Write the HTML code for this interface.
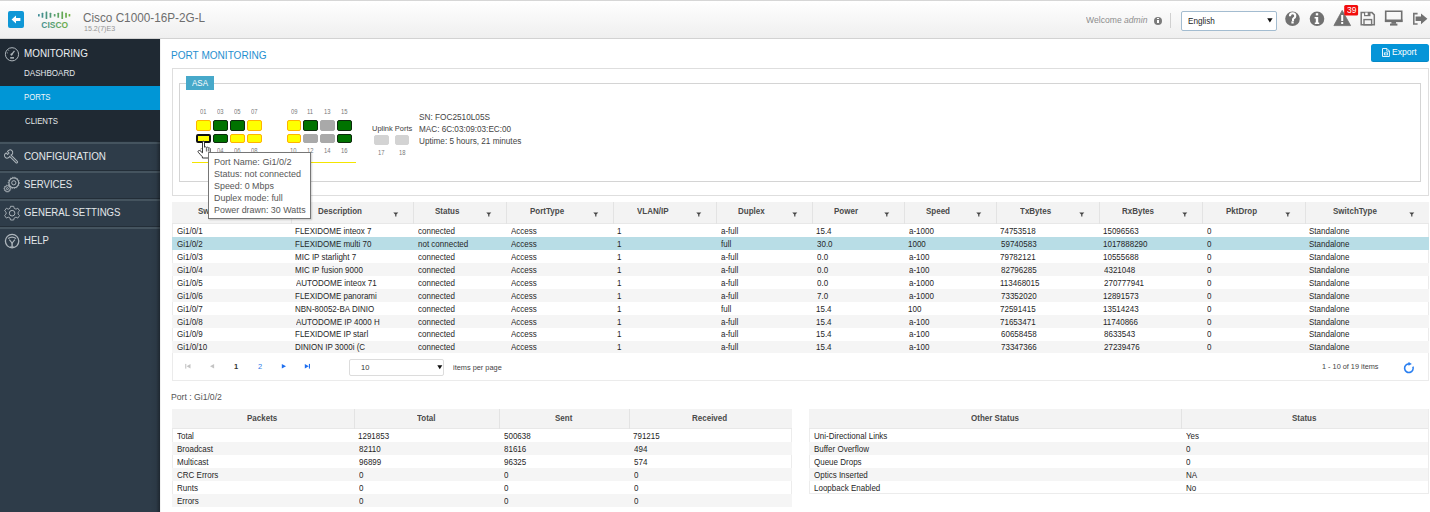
<!DOCTYPE html>
<html><head><meta charset="utf-8"><style>
*{box-sizing:border-box;margin:0;padding:0}
html,body{width:1430px;height:512px;overflow:hidden;background:#fff}
body{position:relative;font-family:"Liberation Sans",sans-serif}
.a,.b{position:absolute}
.t{position:absolute;line-height:1;white-space:nowrap;transform-origin:0 0}
.pb{position:absolute;width:14.5px;border-radius:2px;border:1px solid}
.pb.y{background:#ffff00;border-color:#ffb300}
.pb.g{background:#007300;border-color:#0d2a0d}
.pb.s{background:#a9a9a9;border-color:#a9a9a9}
.pb.h{background:#ffff00;border:2px solid #111}
.pb.u{background:#d3d3d3;border-color:#d3d3d3}
</style></head><body>
<div class='b' style='left:0;top:0;width:1430px;height:39px;border-top:1px solid #d6d6d6;border-bottom:1px solid #d2d2d2;background:linear-gradient(#ffffff 0%,#fcfcfc 15%,#efefef 100%)'></div>
<div class='b' style='left:8px;top:11px;width:16px;height:17px;background:#0f97d6;border-radius:2px'></div>
<svg class='b' style='left:8px;top:11px' width='16' height='17' viewBox='0 0 16 17'><path d='M3.6 8.5 L8 4.4 L8 7.1 L12.4 7.1 L12.4 9.9 L8 9.9 L8 12.6 Z' fill='#fff'/></svg>
<svg class='b' style='left:36px;top:5px' width='36' height='25' viewBox='0 0 36 25'>
 <defs><linearGradient id='cg' x1='0' x2='1'><stop offset='0' stop-color='#3f8c96'/><stop offset='1' stop-color='#72b33f'/></linearGradient>
 <linearGradient id='cg2' gradientUnits='userSpaceOnUse' x1='3' x2='35'><stop offset='0' stop-color='#3f8c96'/><stop offset='1' stop-color='#72b33f'/></linearGradient></defs>
 <g fill='url(#cg2)'>
  <rect x='2.0' y='9.00' width='1.7' height='2.6' rx='0.5'/>
  <rect x='5.6' y='7.80' width='1.7' height='5' rx='0.5'/>
  <rect x='9.6' y='6.50' width='1.7' height='7.6' rx='0.5'/>
  <rect x='13.6' y='7.80' width='1.7' height='5' rx='0.5'/>
  <rect x='17.8' y='9.10' width='1.7' height='2.4' rx='0.5'/>
  <rect x='21.4' y='7.80' width='1.7' height='5' rx='0.5'/>
  <rect x='25.4' y='6.50' width='1.7' height='7.6' rx='0.5'/>
  <rect x='29.2' y='7.80' width='1.7' height='5' rx='0.5'/>
  <rect x='32.6' y='9.00' width='1.7' height='2.6' rx='0.5'/>
 </g>
 <text x='5.3' y='22.7' textLength='26.8' lengthAdjust='spacingAndGlyphs' font-family='Liberation Sans' font-weight='bold' font-size='8.6' fill='url(#cg2)'>CISCO</text>
</svg>
<div class='b' style='left:1154px;top:16.5px;width:8px;height:8px;border-radius:50%;background:#7b7b7b'></div>
<div class='b' style='left:1157.3px;top:18px;width:1.4px;height:1.3px;background:#fff'></div>
<div class='b' style='left:1157.3px;top:19.8px;width:1.4px;height:3.3px;background:#fff'></div>
<div class='b' style='left:1170px;top:13px;width:1px;height:15px;background:#d0d0d0'></div>
<div class='b' style='left:1181px;top:11px;width:96px;height:20px;border:1px solid #a3bcd0;background:#fff;border-radius:2px'></div>
<svg class='b' style='left:1266.5px;top:17.8px' width='6' height='5' viewBox='0 0 6 5'><path d='M0.2 0.3 L5.6 0.3 L2.9 4.4 Z' fill='#111'/></svg>
<div class='b' style='left:0;top:39px;width:160px;height:473px;background:#2e3c49'></div>
<div class='b' style='left:0;top:39px;width:160px;height:103px;background:#1f2933'></div>
<div class='b' style='left:0;top:85.5px;width:160px;height:24px;background:#0096d6'></div>
<div class='b' style='left:0;top:141px;width:160px;height:1px;background:#232e38'></div>
<div class='b' style='left:0;top:142px;width:160px;height:1.5px;background:#45545f'></div>
<div class='b' style='left:0;top:170px;width:160px;height:1px;background:#232e38'></div>
<div class='b' style='left:0;top:171px;width:160px;height:1.5px;background:#45545f'></div>
<div class='b' style='left:0;top:198px;width:160px;height:1px;background:#232e38'></div>
<div class='b' style='left:0;top:199px;width:160px;height:1.5px;background:#45545f'></div>
<div class='b' style='left:0;top:226px;width:160px;height:1px;background:#232e38'></div>
<div class='b' style='left:0;top:227px;width:160px;height:1.5px;background:#45545f'></div>
<div class='b' style='left:150px;top:141px;width:10px;height:371px;background:linear-gradient(90deg,rgba(0,0,0,0),rgba(0,0,0,0.05) 60%,rgba(0,0,0,0.35))'></div>
<div class='b' style='left:160px;top:39px;width:1px;height:473px;background:#f2f2f2'></div>
<div class='b' style='left:1371px;top:44px;width:57.5px;height:17.5px;background:#0595d8;border-radius:2.5px;box-shadow:inset 0 -1px 0 rgba(0,0,0,0.08)'></div>
<svg class='b' style='left:1382.4px;top:48px' width='8' height='9' viewBox='0 0 8 9'>
 <path d='M0.5 0.5 L4.9 0.5 L7.4 3 L7.4 8.5 L0.5 8.5 Z' fill='none' stroke='#e6f5fd' stroke-width='1'/>
 <path d='M4.7 0.5 L4.7 3.2 L7.4 3.2' fill='none' stroke='#e6f5fd' stroke-width='0.8'/>
 <rect x='1.9' y='4.4' width='4' height='2.9' fill='#e6f5fd'/>
 <path d='M2.7 5 L5.1 6.8 M5.1 5 L2.7 6.8' stroke='#0595d8' stroke-width='0.6'/>
</svg>
<div class='b' style='left:171.5px;top:68px;width:1257px;height:128px;border:1px solid #dedede'></div>
<div class='b' style='left:179px;top:83px;width:1242px;height:99px;border:1px solid #d4d4d4'></div>
<div class='b' style='left:186px;top:76px;width:27.7px;height:13.8px;background:#47a9ca'></div>
<div class='pb y' style='left:196.3px;top:120px;height:10.6px'></div>
<div class='pb h' style='left:196.3px;top:133.7px;height:9.4px'></div>
<div class='pb g' style='left:213.2px;top:120px;height:10.6px'></div>
<div class='pb g' style='left:213.2px;top:133.7px;height:9.4px'></div>
<div class='pb g' style='left:230.1px;top:120px;height:10.6px'></div>
<div class='pb y' style='left:230.1px;top:133.7px;height:9.4px'></div>
<div class='pb y' style='left:247.0px;top:120px;height:10.6px'></div>
<div class='pb y' style='left:247.0px;top:133.7px;height:9.4px'></div>
<div class='pb y' style='left:286.7px;top:120px;height:10.6px'></div>
<div class='pb y' style='left:286.7px;top:133.7px;height:9.4px'></div>
<div class='pb g' style='left:303.4px;top:120px;height:10.6px'></div>
<div class='pb s' style='left:303.4px;top:133.7px;height:9.4px'></div>
<div class='pb s' style='left:320.4px;top:120px;height:10.6px'></div>
<div class='pb s' style='left:320.4px;top:133.7px;height:9.4px'></div>
<div class='pb g' style='left:337.2px;top:120px;height:10.6px'></div>
<div class='pb g' style='left:337.2px;top:133.7px;height:9.4px'></div>
<div class='pb u' style='left:374.3px;top:135.3px;height:10.2px'></div>
<div class='pb u' style='left:394.7px;top:135.3px;height:10.2px'></div>
<div class='b' style='left:192px;top:162px;width:164px;height:1px;background:#f4e500'></div>
<div class='b' style='left:171.5px;top:201.5px;width:1257.5px;height:179.5px;border:1px solid #ebebeb'></div>
<div class='b' style='left:172px;top:202px;width:1256.5px;height:22px;background:#f3f3f3;border-bottom:1px solid #e8e8e8'></div>
<div class='b' style='left:291px;top:202px;width:1px;height:21.5px;background:#e3e3e3'></div>
<div class='b' style='left:412.5px;top:202px;width:1px;height:21.5px;background:#e3e3e3'></div>
<div class='b' style='left:506px;top:202px;width:1px;height:21.5px;background:#e3e3e3'></div>
<div class='b' style='left:612.5px;top:202px;width:1px;height:21.5px;background:#e3e3e3'></div>
<div class='b' style='left:716px;top:202px;width:1px;height:21.5px;background:#e3e3e3'></div>
<div class='b' style='left:812px;top:202px;width:1px;height:21.5px;background:#e3e3e3'></div>
<div class='b' style='left:904px;top:202px;width:1px;height:21.5px;background:#e3e3e3'></div>
<div class='b' style='left:996px;top:202px;width:1px;height:21.5px;background:#e3e3e3'></div>
<div class='b' style='left:1099px;top:202px;width:1px;height:21.5px;background:#e3e3e3'></div>
<div class='b' style='left:1202px;top:202px;width:1px;height:21.5px;background:#e3e3e3'></div>
<div class='b' style='left:1305px;top:202px;width:1px;height:21.5px;background:#e3e3e3'></div>
<svg class='b' style='left:271.4px;top:212px' width='6' height='5' viewBox='0 0 6 5'><path d='M0.3 0.4 L5.3 0.4 L3.4 2.4 L3.4 4.6 L2.2 4.6 L2.2 2.4 Z' fill='#444'/></svg>
<svg class='b' style='left:392.9px;top:212px' width='6' height='5' viewBox='0 0 6 5'><path d='M0.3 0.4 L5.3 0.4 L3.4 2.4 L3.4 4.6 L2.2 4.6 L2.2 2.4 Z' fill='#444'/></svg>
<svg class='b' style='left:486.4px;top:212px' width='6' height='5' viewBox='0 0 6 5'><path d='M0.3 0.4 L5.3 0.4 L3.4 2.4 L3.4 4.6 L2.2 4.6 L2.2 2.4 Z' fill='#444'/></svg>
<svg class='b' style='left:592.9px;top:212px' width='6' height='5' viewBox='0 0 6 5'><path d='M0.3 0.4 L5.3 0.4 L3.4 2.4 L3.4 4.6 L2.2 4.6 L2.2 2.4 Z' fill='#444'/></svg>
<svg class='b' style='left:696.4px;top:212px' width='6' height='5' viewBox='0 0 6 5'><path d='M0.3 0.4 L5.3 0.4 L3.4 2.4 L3.4 4.6 L2.2 4.6 L2.2 2.4 Z' fill='#444'/></svg>
<svg class='b' style='left:792.4px;top:212px' width='6' height='5' viewBox='0 0 6 5'><path d='M0.3 0.4 L5.3 0.4 L3.4 2.4 L3.4 4.6 L2.2 4.6 L2.2 2.4 Z' fill='#444'/></svg>
<svg class='b' style='left:884.4px;top:212px' width='6' height='5' viewBox='0 0 6 5'><path d='M0.3 0.4 L5.3 0.4 L3.4 2.4 L3.4 4.6 L2.2 4.6 L2.2 2.4 Z' fill='#444'/></svg>
<svg class='b' style='left:976.4px;top:212px' width='6' height='5' viewBox='0 0 6 5'><path d='M0.3 0.4 L5.3 0.4 L3.4 2.4 L3.4 4.6 L2.2 4.6 L2.2 2.4 Z' fill='#444'/></svg>
<svg class='b' style='left:1079.4px;top:212px' width='6' height='5' viewBox='0 0 6 5'><path d='M0.3 0.4 L5.3 0.4 L3.4 2.4 L3.4 4.6 L2.2 4.6 L2.2 2.4 Z' fill='#444'/></svg>
<svg class='b' style='left:1182.4px;top:212px' width='6' height='5' viewBox='0 0 6 5'><path d='M0.3 0.4 L5.3 0.4 L3.4 2.4 L3.4 4.6 L2.2 4.6 L2.2 2.4 Z' fill='#444'/></svg>
<svg class='b' style='left:1285.4px;top:212px' width='6' height='5' viewBox='0 0 6 5'><path d='M0.3 0.4 L5.3 0.4 L3.4 2.4 L3.4 4.6 L2.2 4.6 L2.2 2.4 Z' fill='#444'/></svg>
<svg class='b' style='left:1408.9px;top:212px' width='6' height='5' viewBox='0 0 6 5'><path d='M0.3 0.4 L5.3 0.4 L3.4 2.4 L3.4 4.6 L2.2 4.6 L2.2 2.4 Z' fill='#444'/></svg>
<div class='b' style='left:172px;top:237.30px;width:1256.5px;height:12.9px;background:#b8dde6'></div>
<div class='b' style='left:172px;top:263.10px;width:1256.5px;height:12.9px;background:#f5f5f5'></div>
<div class='b' style='left:172px;top:288.90px;width:1256.5px;height:12.9px;background:#f5f5f5'></div>
<div class='b' style='left:172px;top:314.70px;width:1256.5px;height:12.9px;background:#f5f5f5'></div>
<div class='b' style='left:172px;top:340.50px;width:1256.5px;height:12.9px;background:#f5f5f5'></div>
<svg class='b' style='left:180px;top:360px' width='140' height='12' viewBox='180 360 140 12'>
 <rect x='185.2' y='363.9' width='1.1' height='4.7' fill='#c4c4c4'/>
 <path d='M190.5 363.9 L190.5 368.6 L186.6 366.25 Z' fill='#c4c4c4'/>
 <path d='M214.1 363.9 L214.1 368.6 L210 366.25 Z' fill='#c4c4c4'/>
 <path d='M281.8 363.9 L281.8 368.6 L286 366.25 Z' fill='#1f6fef'/>
 <path d='M304.8 363.9 L304.8 368.6 L308.8 366.25 Z' fill='#1f6fef'/>
 <rect x='308.9' y='363.9' width='1.1' height='4.7' fill='#1f6fef'/>
</svg>
<div class='b' style='left:349px;top:358.7px;width:95px;height:17.8px;border:1px solid #dcdcdc;border-radius:2px;background:#fff'></div>
<svg class='b' style='left:436.5px;top:364.5px' width='6' height='5' viewBox='0 0 6 5'><path d='M0.3 0.3 L5.3 0.3 L2.8 4.3 Z' fill='#111'/></svg>
<svg class='b' style='left:1403.3px;top:361.6px' width='12' height='12' viewBox='0 0 12 12'><path d='M9.9 4.6 A4.3 4.3 0 1 1 6 1.9' fill='none' stroke='#2a7ff0' stroke-width='1.6'/><path d='M5.5 -0.1 L8.9 1.9 L5.5 3.8 Z' fill='#2a7ff0'/></svg>
<div class='b' style='left:171.5px;top:408.5px;width:620.5px;height:98.5px;border:1px solid #ececec'></div>
<div class='b' style='left:172px;top:409px;width:619.5px;height:19.5px;background:#f3f3f3;border-bottom:1px solid #e8e8e8'></div>
<div class='b' style='left:353.5px;top:409px;width:1px;height:19.5px;background:#e3e3e3'></div>
<div class='b' style='left:498.6px;top:409px;width:1px;height:19.5px;background:#e3e3e3'></div>
<div class='b' style='left:628.9px;top:409px;width:1px;height:19.5px;background:#e3e3e3'></div>
<div class='b' style='left:172px;top:441.5px;width:619.5px;height:13px;background:#f5f5f5'></div>
<div class='b' style='left:172px;top:467.5px;width:619.5px;height:13px;background:#f5f5f5'></div>
<div class='b' style='left:172px;top:493.5px;width:619.5px;height:13px;background:#f5f5f5'></div>
<div class='b' style='left:808.5px;top:408.5px;width:620px;height:85.5px;border:1px solid #ececec'></div>
<div class='b' style='left:809px;top:409px;width:619px;height:19.5px;background:#f3f3f3;border-bottom:1px solid #e8e8e8'></div>
<div class='b' style='left:1181px;top:409px;width:1px;height:19.5px;background:#e3e3e3'></div>
<div class='b' style='left:809px;top:441.5px;width:619px;height:13px;background:#f5f5f5'></div>
<div class='b' style='left:809px;top:467.5px;width:619px;height:13px;background:#f5f5f5'></div>
<!-- header icons -->
<svg class="a" style="left:1280px;top:0px" width="150" height="38" viewBox="0 0 150 38">
 <circle cx="12.5" cy="18.8" r="7.3" fill="#717171"/>
 <path d="M9.9 16.3 Q9.9 13.2 12.6 13.2 Q15.3 13.2 15.3 15.9 Q15.3 17.4 13.6 18.4 Q13 18.8 13 19.9 L12 19.9" fill="none" stroke="#fff" stroke-width="2.1"/>
 <rect x="11.4" y="21.3" width="2.3" height="2.2" fill="#fff"/>
 <circle cx="37" cy="18.8" r="7.3" fill="#717171"/>
 <rect x="35.8" y="13.2" width="2.4" height="2.2" fill="#fff"/>
 <path d="M34.6 17 L38.2 17 L38.2 22.6 L39.2 22.6 L39.2 24 L34.8 24 L34.8 22.6 L35.8 22.6 L35.8 18.4 L34.6 18.4 Z" fill="#fff"/>
 <path d="M62.2 10.4 L70.6 25.6 L53.9 25.6 Z" fill="#717171" stroke="#717171" stroke-width="0.8" stroke-linejoin="round"/>
 <rect x="61.2" y="15" width="2" height="6" fill="#fff"/>
 <rect x="61.2" y="22" width="2" height="2" fill="#fff"/>
 <rect x="64.2" y="5.1" width="13.9" height="10.5" rx="1.5" fill="#f20d0d"/>
 <path d="M81.2 12.6 L92 12.6 L94.3 14.9 L94.3 24.8 L81.2 24.8 Z" fill="none" stroke="#777" stroke-width="1.5"/>
 <rect x="84" y="12.6" width="6.5" height="3.6" fill="#777"/>
 <rect x="85.2" y="12.6" width="2.5" height="2.4" fill="#fff"/>
 <rect x="84" y="19.6" width="7.6" height="5.2" fill="none" stroke="#777" stroke-width="1.4"/>
 <path d="M105.7 11.2 L121.7 11.2 L121.7 21.3 L105.7 21.3 Z" fill="none" stroke="#717171" stroke-width="1.6"/>
 <rect x="104.9" y="19.5" width="17.6" height="2.6" fill="#717171"/>
 <rect x="111.4" y="22" width="4.6" height="1.8" fill="#717171"/>
 <rect x="110" y="23.6" width="7.4" height="2" fill="#717171"/>
 <path d="M137.6 13.6 L133.8 13.6 L133.8 24 L137.6 24" fill="none" stroke="#777" stroke-width="1.6"/>
 <path d="M135.6 16.6 L141 16.6 L141 13.4 L147.4 18.8 L141 24.2 L141 21 L135.6 21 Z" fill="#717171"/>
</svg>

<!-- sidebar icons -->
<svg class="a" style="left:0;top:39px" width="24" height="220" viewBox="0 39 24 220">
 <g fill="none" stroke="#aeb6bc" stroke-width="1">
  <circle cx="12" cy="54.3" r="6.6"/>
  <path d="M11.6 54.5 L14.5 50.9" stroke-width="1.2"/>
  <circle cx="11.5" cy="54.6" r="1.1" fill="#aeb6bc" stroke="none"/>
  <rect x="10.2" y="57.1" width="3.8" height="1.5" fill="#aeb6bc" stroke="none"/>
  <path d="M6.9 52.6 L7.9 53.1 M8.2 49.9 L8.9 50.7" stroke-width="0.8"/>
  <!-- wrench -->
  <g transform="translate(8.6 154) rotate(45)" stroke-width="1">
   <path d="M-2.5 -1.0 A2.7 2.7 0 1 1 2.5 -1.0 L11.3 -1.0 A1.0 1.0 0 0 1 11.3 1.0 L2.5 1.0 A2.7 2.7 0 1 1 -2.5 1.0 L-0.4 1.0 L-0.4 -1.0 Z"/>
  </g>
  <!-- services gears -->
  <circle cx="13.8" cy="182.8" r="4.9" stroke-width="1.1"/>
  <circle cx="13.8" cy="182.8" r="2.1" stroke-width="1"/>
  <circle cx="13.8" cy="182.8" r="5.6" stroke-width="0.9" stroke-dasharray="1.1 1.3"/>
  <circle cx="7.4" cy="188.6" r="2.9" stroke-width="1"/>
  <circle cx="7.4" cy="188.6" r="1" stroke-width="1"/>
  <circle cx="7.4" cy="188.6" r="3.5" stroke-width="0.8" stroke-dasharray="1 1.1"/>
  <!-- settings gear -->
  <path d="M10.5 206.3 L13.7 206.3 L14.2 208.3 L16 209.2 L17.8 208.2 L19.6 210.8 L18.1 212.2 L18.1 214.1 L19.6 215.5 L17.8 218.1 L16 217.1 L14.2 218 L13.7 220 L10.5 220 L10 218 L8.2 217.1 L6.4 218.1 L4.6 215.5 L6.1 214.1 L6.1 212.2 L4.6 210.8 L6.4 208.2 L8.2 209.2 L10 208.3 Z" stroke-width="0.9"/>
  <circle cx="12.1" cy="213.2" r="2.8"/>
  <!-- help globe -->
  <circle cx="12.1" cy="241.1" r="6.7" stroke-width="1.3"/>
  <path d="M8.2 238.6 Q12.1 235.6 16 238.6" stroke-width="1.2"/>
  <path d="M9.3 239.6 L12.1 243.2 L14.9 239.6" stroke-width="1.1"/>
  <path d="M12.1 243 L12.1 247.6" stroke-width="1.4"/>
  <path d="M10 247 L14.2 247" stroke-width="1"/>
 </g>
</svg>



<!-- main -->

<div class='t' style='left:83.41px;top:13px;font-size:11.85px;color:#6e6e6e;transform:scaleX(0.9917);'>Cisco C1000-16P-2G-L</div>
<div class='t' style='left:84.03px;top:25px;font-size:7.34px;color:#959595;transform:scaleX(0.9677);'>15.2(7)E3</div>
<div class='t' style='left:1086.40px;top:16px;font-size:9.18px;color:#8d8d8d;transform:scaleX(0.9369);'>Welcome <i>admin</i></div>
<div class='t' style='left:1187.61px;top:17px;font-size:9.18px;color:#1e1e1e;transform:scaleX(0.8897);'>English</div>
<div class='t' style='left:1346.60px;top:6px;font-size:9.00px;color:#fff;transform:scaleX(0.9400);'>39</div>
<div class='t' style='left:24.42px;top:48px;font-size:11.24px;color:#eceff2;transform:scaleX(0.8775);'>MONITORING</div>
<div class='t' style='left:24.43px;top:69px;font-size:9.31px;color:#e4e8eb;transform:scaleX(0.8672);'>DASHBOARD</div>
<div class='t' style='left:24.47px;top:93px;font-size:9.31px;color:#f2f6f9;transform:scaleX(0.8323);'>PORTS</div>
<div class='t' style='left:25.30px;top:117px;font-size:9.31px;color:#e4e8eb;transform:scaleX(0.8385);'>CLIENTS</div>
<div class='t' style='left:24.32px;top:151px;font-size:11.26px;color:#e4e8eb;transform:scaleX(0.8761);'>CONFIGURATION</div>
<div class='t' style='left:24.35px;top:179px;font-size:11.26px;color:#e4e8eb;transform:scaleX(0.8509);'>SERVICES</div>
<div class='t' style='left:24.33px;top:207px;font-size:11.04px;color:#e4e8eb;transform:scaleX(0.8734);'>GENERAL SETTINGS</div>
<div class='t' style='left:24.35px;top:235px;font-size:11.26px;color:#e4e8eb;transform:scaleX(0.8464);'>HELP</div>
<div class='t' style='left:170.77px;top:50px;font-size:10.85px;color:#1f8fd0;transform:scaleX(0.9277);'>PORT MONITORING</div>
<div class='t' style='left:1391.78px;top:48px;font-size:9.35px;color:#fff;transform:scaleX(0.9154);'>Export</div>
<div class='t' style='left:191.90px;top:79px;font-size:8.80px;color:#fff;transform:scaleX(0.9111);'>ASA</div>
<div class='t' style='left:371.90px;top:125px;font-size:7.73px;color:#3c3c3c;transform:scaleX(0.9659);'>Uplink Ports</div>
<div class='t' style='left:419.09px;top:113px;font-size:9.02px;color:#444;transform:scaleX(0.9145);'>SN: FOC2510L05S</div>
<div class='t' style='left:419.10px;top:125px;font-size:9.02px;color:#444;transform:scaleX(0.9050);'>MAC: 6C:03:09:03:EC:00</div>
<div class='t' style='left:419.09px;top:137px;font-size:9.02px;color:#444;transform:scaleX(0.9072);'>Uptime: 5 hours, 21 minutes</div>
<div class='t' style='left:200.30px;top:109px;font-size:6.30px;color:#7a7a7a;transform:scaleX(0.9300);'>01</div>
<div class='t' style='left:200.30px;top:148px;font-size:6.30px;color:#7a7a7a;transform:scaleX(0.9300);'>02</div>
<div class='t' style='left:217.19px;top:109px;font-size:6.30px;color:#7a7a7a;transform:scaleX(0.9300);'>03</div>
<div class='t' style='left:217.19px;top:148px;font-size:6.30px;color:#7a7a7a;transform:scaleX(0.9300);'>04</div>
<div class='t' style='left:234.09px;top:109px;font-size:6.30px;color:#7a7a7a;transform:scaleX(0.9300);'>05</div>
<div class='t' style='left:234.09px;top:148px;font-size:6.30px;color:#7a7a7a;transform:scaleX(0.9300);'>06</div>
<div class='t' style='left:251.00px;top:109px;font-size:6.30px;color:#7a7a7a;transform:scaleX(0.9300);'>07</div>
<div class='t' style='left:251.00px;top:148px;font-size:6.30px;color:#7a7a7a;transform:scaleX(0.9300);'>08</div>
<div class='t' style='left:290.69px;top:109px;font-size:6.30px;color:#7a7a7a;transform:scaleX(0.9300);'>09</div>
<div class='t' style='left:290.23px;top:148px;font-size:6.30px;color:#7a7a7a;transform:scaleX(0.9300);'>10</div>
<div class='t' style='left:307.39px;top:109px;font-size:6.30px;color:#7a7a7a;transform:scaleX(0.9300);'>11</div>
<div class='t' style='left:306.93px;top:148px;font-size:6.30px;color:#7a7a7a;transform:scaleX(0.9300);'>12</div>
<div class='t' style='left:323.93px;top:109px;font-size:6.30px;color:#7a7a7a;transform:scaleX(0.9300);'>13</div>
<div class='t' style='left:323.93px;top:148px;font-size:6.30px;color:#7a7a7a;transform:scaleX(0.9300);'>14</div>
<div class='t' style='left:340.73px;top:109px;font-size:6.30px;color:#7a7a7a;transform:scaleX(0.9300);'>15</div>
<div class='t' style='left:340.73px;top:148px;font-size:6.30px;color:#7a7a7a;transform:scaleX(0.9300);'>16</div>
<div class='t' style='left:378.28px;top:150px;font-size:6.30px;color:#7a7a7a;transform:scaleX(0.9300);'>17</div>
<div class='t' style='left:398.78px;top:150px;font-size:6.30px;color:#7a7a7a;transform:scaleX(0.9300);'>18</div>
<div class='t' style='left:197.56px;top:207px;font-size:9.00px;color:#4a4a4a;font-weight:bold;transform:scaleX(0.8889);'>Switch Ports</div>
<div class='t' style='left:317.53px;top:207px;font-size:9.00px;color:#4a4a4a;font-weight:bold;transform:scaleX(0.8889);'>Description</div>
<div class='t' style='left:434.81px;top:207px;font-size:9.00px;color:#4a4a4a;font-weight:bold;transform:scaleX(0.8889);'>Status</div>
<div class='t' style='left:529.92px;top:207px;font-size:9.00px;color:#4a4a4a;font-weight:bold;transform:scaleX(0.8889);'>PortType</div>
<div class='t' style='left:636.69px;top:207px;font-size:9.00px;color:#4a4a4a;font-weight:bold;transform:scaleX(0.8889);'>VLAN/IP</div>
<div class='t' style='left:738.22px;top:207px;font-size:9.00px;color:#4a4a4a;font-weight:bold;transform:scaleX(0.8889);'>Duplex</div>
<div class='t' style='left:833.56px;top:207px;font-size:9.00px;color:#4a4a4a;font-weight:bold;transform:scaleX(0.8889);'>Power</div>
<div class='t' style='left:926.00px;top:207px;font-size:9.00px;color:#4a4a4a;font-weight:bold;transform:scaleX(0.8889);'>Speed</div>
<div class='t' style='left:1019.94px;top:207px;font-size:9.00px;color:#4a4a4a;font-weight:bold;transform:scaleX(0.8889);'>TxBytes</div>
<div class='t' style='left:1122.06px;top:207px;font-size:9.00px;color:#4a4a4a;font-weight:bold;transform:scaleX(0.8889);'>RxBytes</div>
<div class='t' style='left:1225.50px;top:207px;font-size:9.00px;color:#4a4a4a;font-weight:bold;transform:scaleX(0.8889);'>PktDrop</div>
<div class='t' style='left:1332.53px;top:207px;font-size:9.00px;color:#4a4a4a;font-weight:bold;transform:scaleX(0.8889);'>SwitchType</div>
<div class='t' style='left:177.00px;top:227px;font-size:9.00px;color:#262626;transform:scaleX(0.8889);'>Gi1/0/1</div>
<div class='t' style='left:295.11px;top:227px;font-size:9.00px;color:#262626;transform:scaleX(0.8889);'>FLEXIDOME inteox 7</div>
<div class='t' style='left:417.50px;top:227px;font-size:9.00px;color:#262626;transform:scaleX(0.8889);'>connected</div>
<div class='t' style='left:511.00px;top:227px;font-size:9.00px;color:#262626;transform:scaleX(0.8889);'>Access</div>
<div class='t' style='left:616.61px;top:227px;font-size:9.00px;color:#262626;transform:scaleX(0.8889);'>1</div>
<div class='t' style='left:721.00px;top:227px;font-size:9.00px;color:#262626;transform:scaleX(0.8889);'>a-full</div>
<div class='t' style='left:816.11px;top:227px;font-size:9.00px;color:#262626;transform:scaleX(0.8889);'>15.4</div>
<div class='t' style='left:909.00px;top:227px;font-size:9.00px;color:#262626;transform:scaleX(0.8889);'>a-1000</div>
<div class='t' style='left:1000.11px;top:227px;font-size:9.00px;color:#262626;transform:scaleX(0.8889);'>74753518</div>
<div class='t' style='left:1103.11px;top:227px;font-size:9.00px;color:#262626;transform:scaleX(0.8889);'>15096563</div>
<div class='t' style='left:1207.00px;top:227px;font-size:9.00px;color:#262626;transform:scaleX(0.8889);'>0</div>
<div class='t' style='left:1309.11px;top:227px;font-size:9.00px;color:#262626;transform:scaleX(0.8889);'>Standalone</div>
<div class='t' style='left:177.00px;top:240px;font-size:9.00px;color:#262626;transform:scaleX(0.8889);'>Gi1/0/2</div>
<div class='t' style='left:295.11px;top:240px;font-size:9.00px;color:#262626;transform:scaleX(0.8889);'>FLEXIDOME multi 70</div>
<div class='t' style='left:417.50px;top:240px;font-size:9.00px;color:#262626;transform:scaleX(0.8889);'>not connected</div>
<div class='t' style='left:511.00px;top:240px;font-size:9.00px;color:#262626;transform:scaleX(0.8889);'>Access</div>
<div class='t' style='left:616.61px;top:240px;font-size:9.00px;color:#262626;transform:scaleX(0.8889);'>1</div>
<div class='t' style='left:721.00px;top:240px;font-size:9.00px;color:#262626;transform:scaleX(0.8889);'>full</div>
<div class='t' style='left:817.00px;top:240px;font-size:9.00px;color:#262626;transform:scaleX(0.8889);'>30.0</div>
<div class='t' style='left:908.11px;top:240px;font-size:9.00px;color:#262626;transform:scaleX(0.8889);'>1000</div>
<div class='t' style='left:1001.00px;top:240px;font-size:9.00px;color:#262626;transform:scaleX(0.8889);'>59740583</div>
<div class='t' style='left:1103.11px;top:240px;font-size:9.00px;color:#262626;transform:scaleX(0.8889);'>1017888290</div>
<div class='t' style='left:1207.00px;top:240px;font-size:9.00px;color:#262626;transform:scaleX(0.8889);'>0</div>
<div class='t' style='left:1309.11px;top:240px;font-size:9.00px;color:#262626;transform:scaleX(0.8889);'>Standalone</div>
<div class='t' style='left:177.00px;top:253px;font-size:9.00px;color:#262626;transform:scaleX(0.8889);'>Gi1/0/3</div>
<div class='t' style='left:295.11px;top:253px;font-size:9.00px;color:#262626;transform:scaleX(0.8889);'>MIC IP starlight 7</div>
<div class='t' style='left:417.50px;top:253px;font-size:9.00px;color:#262626;transform:scaleX(0.8889);'>connected</div>
<div class='t' style='left:511.00px;top:253px;font-size:9.00px;color:#262626;transform:scaleX(0.8889);'>Access</div>
<div class='t' style='left:616.61px;top:253px;font-size:9.00px;color:#262626;transform:scaleX(0.8889);'>1</div>
<div class='t' style='left:721.00px;top:253px;font-size:9.00px;color:#262626;transform:scaleX(0.8889);'>a-full</div>
<div class='t' style='left:817.00px;top:253px;font-size:9.00px;color:#262626;transform:scaleX(0.8889);'>0.0</div>
<div class='t' style='left:909.00px;top:253px;font-size:9.00px;color:#262626;transform:scaleX(0.8889);'>a-100</div>
<div class='t' style='left:1000.11px;top:253px;font-size:9.00px;color:#262626;transform:scaleX(0.8889);'>79782121</div>
<div class='t' style='left:1103.11px;top:253px;font-size:9.00px;color:#262626;transform:scaleX(0.8889);'>10555688</div>
<div class='t' style='left:1207.00px;top:253px;font-size:9.00px;color:#262626;transform:scaleX(0.8889);'>0</div>
<div class='t' style='left:1309.11px;top:253px;font-size:9.00px;color:#262626;transform:scaleX(0.8889);'>Standalone</div>
<div class='t' style='left:177.00px;top:266px;font-size:9.00px;color:#262626;transform:scaleX(0.8889);'>Gi1/0/4</div>
<div class='t' style='left:295.11px;top:266px;font-size:9.00px;color:#262626;transform:scaleX(0.8889);'>MIC IP fusion 9000</div>
<div class='t' style='left:417.50px;top:266px;font-size:9.00px;color:#262626;transform:scaleX(0.8889);'>connected</div>
<div class='t' style='left:511.00px;top:266px;font-size:9.00px;color:#262626;transform:scaleX(0.8889);'>Access</div>
<div class='t' style='left:616.61px;top:266px;font-size:9.00px;color:#262626;transform:scaleX(0.8889);'>1</div>
<div class='t' style='left:721.00px;top:266px;font-size:9.00px;color:#262626;transform:scaleX(0.8889);'>a-full</div>
<div class='t' style='left:817.00px;top:266px;font-size:9.00px;color:#262626;transform:scaleX(0.8889);'>0.0</div>
<div class='t' style='left:909.00px;top:266px;font-size:9.00px;color:#262626;transform:scaleX(0.8889);'>a-100</div>
<div class='t' style='left:1001.00px;top:266px;font-size:9.00px;color:#262626;transform:scaleX(0.8889);'>82796285</div>
<div class='t' style='left:1104.00px;top:266px;font-size:9.00px;color:#262626;transform:scaleX(0.8889);'>4321048</div>
<div class='t' style='left:1207.00px;top:266px;font-size:9.00px;color:#262626;transform:scaleX(0.8889);'>0</div>
<div class='t' style='left:1309.11px;top:266px;font-size:9.00px;color:#262626;transform:scaleX(0.8889);'>Standalone</div>
<div class='t' style='left:177.00px;top:279px;font-size:9.00px;color:#262626;transform:scaleX(0.8889);'>Gi1/0/5</div>
<div class='t' style='left:296.00px;top:279px;font-size:9.00px;color:#262626;transform:scaleX(0.8889);'>AUTODOME inteox 71</div>
<div class='t' style='left:417.50px;top:279px;font-size:9.00px;color:#262626;transform:scaleX(0.8889);'>connected</div>
<div class='t' style='left:511.00px;top:279px;font-size:9.00px;color:#262626;transform:scaleX(0.8889);'>Access</div>
<div class='t' style='left:616.61px;top:279px;font-size:9.00px;color:#262626;transform:scaleX(0.8889);'>1</div>
<div class='t' style='left:721.00px;top:279px;font-size:9.00px;color:#262626;transform:scaleX(0.8889);'>a-full</div>
<div class='t' style='left:817.00px;top:279px;font-size:9.00px;color:#262626;transform:scaleX(0.8889);'>0.0</div>
<div class='t' style='left:909.00px;top:279px;font-size:9.00px;color:#262626;transform:scaleX(0.8889);'>a-1000</div>
<div class='t' style='left:1000.11px;top:279px;font-size:9.00px;color:#262626;transform:scaleX(0.8889);'>113468015</div>
<div class='t' style='left:1104.00px;top:279px;font-size:9.00px;color:#262626;transform:scaleX(0.8889);'>270777941</div>
<div class='t' style='left:1207.00px;top:279px;font-size:9.00px;color:#262626;transform:scaleX(0.8889);'>0</div>
<div class='t' style='left:1309.11px;top:279px;font-size:9.00px;color:#262626;transform:scaleX(0.8889);'>Standalone</div>
<div class='t' style='left:177.00px;top:292px;font-size:9.00px;color:#262626;transform:scaleX(0.8889);'>Gi1/0/6</div>
<div class='t' style='left:295.11px;top:292px;font-size:9.00px;color:#262626;transform:scaleX(0.8889);'>FLEXIDOME panorami</div>
<div class='t' style='left:417.50px;top:292px;font-size:9.00px;color:#262626;transform:scaleX(0.8889);'>connected</div>
<div class='t' style='left:511.00px;top:292px;font-size:9.00px;color:#262626;transform:scaleX(0.8889);'>Access</div>
<div class='t' style='left:616.61px;top:292px;font-size:9.00px;color:#262626;transform:scaleX(0.8889);'>1</div>
<div class='t' style='left:721.00px;top:292px;font-size:9.00px;color:#262626;transform:scaleX(0.8889);'>a-full</div>
<div class='t' style='left:817.00px;top:292px;font-size:9.00px;color:#262626;transform:scaleX(0.8889);'>7.0</div>
<div class='t' style='left:909.00px;top:292px;font-size:9.00px;color:#262626;transform:scaleX(0.8889);'>a-1000</div>
<div class='t' style='left:1001.00px;top:292px;font-size:9.00px;color:#262626;transform:scaleX(0.8889);'>73352020</div>
<div class='t' style='left:1103.11px;top:292px;font-size:9.00px;color:#262626;transform:scaleX(0.8889);'>12891573</div>
<div class='t' style='left:1207.00px;top:292px;font-size:9.00px;color:#262626;transform:scaleX(0.8889);'>0</div>
<div class='t' style='left:1309.11px;top:292px;font-size:9.00px;color:#262626;transform:scaleX(0.8889);'>Standalone</div>
<div class='t' style='left:177.00px;top:305px;font-size:9.00px;color:#262626;transform:scaleX(0.8889);'>Gi1/0/7</div>
<div class='t' style='left:295.11px;top:305px;font-size:9.00px;color:#262626;transform:scaleX(0.8889);'>NBN-80052-BA DINIO</div>
<div class='t' style='left:417.50px;top:305px;font-size:9.00px;color:#262626;transform:scaleX(0.8889);'>connected</div>
<div class='t' style='left:511.00px;top:305px;font-size:9.00px;color:#262626;transform:scaleX(0.8889);'>Access</div>
<div class='t' style='left:616.61px;top:305px;font-size:9.00px;color:#262626;transform:scaleX(0.8889);'>1</div>
<div class='t' style='left:721.00px;top:305px;font-size:9.00px;color:#262626;transform:scaleX(0.8889);'>full</div>
<div class='t' style='left:816.11px;top:305px;font-size:9.00px;color:#262626;transform:scaleX(0.8889);'>15.4</div>
<div class='t' style='left:908.11px;top:305px;font-size:9.00px;color:#262626;transform:scaleX(0.8889);'>100</div>
<div class='t' style='left:1000.11px;top:305px;font-size:9.00px;color:#262626;transform:scaleX(0.8889);'>72591415</div>
<div class='t' style='left:1103.11px;top:305px;font-size:9.00px;color:#262626;transform:scaleX(0.8889);'>13514243</div>
<div class='t' style='left:1207.00px;top:305px;font-size:9.00px;color:#262626;transform:scaleX(0.8889);'>0</div>
<div class='t' style='left:1309.11px;top:305px;font-size:9.00px;color:#262626;transform:scaleX(0.8889);'>Standalone</div>
<div class='t' style='left:177.00px;top:318px;font-size:9.00px;color:#262626;transform:scaleX(0.8889);'>Gi1/0/8</div>
<div class='t' style='left:296.00px;top:318px;font-size:9.00px;color:#262626;transform:scaleX(0.8889);'>AUTODOME IP 4000 H</div>
<div class='t' style='left:417.50px;top:318px;font-size:9.00px;color:#262626;transform:scaleX(0.8889);'>connected</div>
<div class='t' style='left:511.00px;top:318px;font-size:9.00px;color:#262626;transform:scaleX(0.8889);'>Access</div>
<div class='t' style='left:616.61px;top:318px;font-size:9.00px;color:#262626;transform:scaleX(0.8889);'>1</div>
<div class='t' style='left:721.00px;top:318px;font-size:9.00px;color:#262626;transform:scaleX(0.8889);'>a-full</div>
<div class='t' style='left:816.11px;top:318px;font-size:9.00px;color:#262626;transform:scaleX(0.8889);'>15.4</div>
<div class='t' style='left:909.00px;top:318px;font-size:9.00px;color:#262626;transform:scaleX(0.8889);'>a-100</div>
<div class='t' style='left:1000.11px;top:318px;font-size:9.00px;color:#262626;transform:scaleX(0.8889);'>71653471</div>
<div class='t' style='left:1103.11px;top:318px;font-size:9.00px;color:#262626;transform:scaleX(0.8889);'>11740866</div>
<div class='t' style='left:1207.00px;top:318px;font-size:9.00px;color:#262626;transform:scaleX(0.8889);'>0</div>
<div class='t' style='left:1309.11px;top:318px;font-size:9.00px;color:#262626;transform:scaleX(0.8889);'>Standalone</div>
<div class='t' style='left:177.00px;top:330px;font-size:9.00px;color:#262626;transform:scaleX(0.8889);'>Gi1/0/9</div>
<div class='t' style='left:295.11px;top:330px;font-size:9.00px;color:#262626;transform:scaleX(0.8889);'>FLEXIDOME IP starl</div>
<div class='t' style='left:417.50px;top:330px;font-size:9.00px;color:#262626;transform:scaleX(0.8889);'>connected</div>
<div class='t' style='left:511.00px;top:330px;font-size:9.00px;color:#262626;transform:scaleX(0.8889);'>Access</div>
<div class='t' style='left:616.61px;top:330px;font-size:9.00px;color:#262626;transform:scaleX(0.8889);'>1</div>
<div class='t' style='left:721.00px;top:330px;font-size:9.00px;color:#262626;transform:scaleX(0.8889);'>a-full</div>
<div class='t' style='left:816.11px;top:330px;font-size:9.00px;color:#262626;transform:scaleX(0.8889);'>15.4</div>
<div class='t' style='left:909.00px;top:330px;font-size:9.00px;color:#262626;transform:scaleX(0.8889);'>a-100</div>
<div class='t' style='left:1001.00px;top:330px;font-size:9.00px;color:#262626;transform:scaleX(0.8889);'>60658458</div>
<div class='t' style='left:1104.00px;top:330px;font-size:9.00px;color:#262626;transform:scaleX(0.8889);'>8633543</div>
<div class='t' style='left:1207.00px;top:330px;font-size:9.00px;color:#262626;transform:scaleX(0.8889);'>0</div>
<div class='t' style='left:1309.11px;top:330px;font-size:9.00px;color:#262626;transform:scaleX(0.8889);'>Standalone</div>
<div class='t' style='left:177.00px;top:343px;font-size:9.00px;color:#262626;transform:scaleX(0.8889);'>Gi1/0/10</div>
<div class='t' style='left:295.11px;top:343px;font-size:9.00px;color:#262626;transform:scaleX(0.8889);'>DINION IP 3000i (C</div>
<div class='t' style='left:417.50px;top:343px;font-size:9.00px;color:#262626;transform:scaleX(0.8889);'>connected</div>
<div class='t' style='left:511.00px;top:343px;font-size:9.00px;color:#262626;transform:scaleX(0.8889);'>Access</div>
<div class='t' style='left:616.61px;top:343px;font-size:9.00px;color:#262626;transform:scaleX(0.8889);'>1</div>
<div class='t' style='left:721.00px;top:343px;font-size:9.00px;color:#262626;transform:scaleX(0.8889);'>a-full</div>
<div class='t' style='left:816.11px;top:343px;font-size:9.00px;color:#262626;transform:scaleX(0.8889);'>15.4</div>
<div class='t' style='left:909.00px;top:343px;font-size:9.00px;color:#262626;transform:scaleX(0.8889);'>a-100</div>
<div class='t' style='left:1001.00px;top:343px;font-size:9.00px;color:#262626;transform:scaleX(0.8889);'>73347366</div>
<div class='t' style='left:1104.00px;top:343px;font-size:9.00px;color:#262626;transform:scaleX(0.8889);'>27239476</div>
<div class='t' style='left:1207.00px;top:343px;font-size:9.00px;color:#262626;transform:scaleX(0.8889);'>0</div>
<div class='t' style='left:1309.11px;top:343px;font-size:9.00px;color:#262626;transform:scaleX(0.8889);'>Standalone</div>
<div class='t' style='left:234.17px;top:363px;font-size:8.10px;color:#333;font-weight:bold;transform:scaleX(0.9259);'>1</div>
<div class='t' style='left:257.60px;top:363px;font-size:8.10px;color:#2f7de9;transform:scaleX(0.9259);'>2</div>
<div class='t' style='left:361.37px;top:364px;font-size:8.10px;color:#333;transform:scaleX(0.9259);'>10</div>
<div class='t' style='left:453.00px;top:364px;font-size:7.99px;color:#444;transform:scaleX(0.9231);'>items per page</div>
<div class='t' style='left:1321.87px;top:363px;font-size:7.83px;color:#444;transform:scaleX(0.9339);'>1 - 10 of 19 items</div>
<div class='t' style='left:170.54px;top:393px;font-size:8.99px;color:#555;transform:scaleX(0.9608);'>Port : Gi1/0/2</div>
<div class='t' style='left:247.19px;top:414px;font-size:9.00px;color:#4a4a4a;font-weight:bold;transform:scaleX(0.8889);'>Packets</div>
<div class='t' style='left:417.16px;top:414px;font-size:9.00px;color:#4a4a4a;font-weight:bold;transform:scaleX(0.8889);'>Total</div>
<div class='t' style='left:555.31px;top:414px;font-size:9.00px;color:#4a4a4a;font-weight:bold;transform:scaleX(0.8889);'>Sent</div>
<div class='t' style='left:692.42px;top:414px;font-size:9.00px;color:#4a4a4a;font-weight:bold;transform:scaleX(0.8889);'>Received</div>
<div class='t' style='left:971.00px;top:414px;font-size:9.00px;color:#4a4a4a;font-weight:bold;transform:scaleX(0.8889);'>Other Status</div>
<div class='t' style='left:1292.06px;top:414px;font-size:9.00px;color:#4a4a4a;font-weight:bold;transform:scaleX(0.8889);'>Status</div>
<div class='t' style='left:177.40px;top:432px;font-size:9.00px;color:#262626;transform:scaleX(0.8889);'>Total</div>
<div class='t' style='left:358.01px;top:432px;font-size:9.00px;color:#262626;transform:scaleX(0.8889);'>1291853</div>
<div class='t' style='left:504.00px;top:432px;font-size:9.00px;color:#262626;transform:scaleX(0.8889);'>500638</div>
<div class='t' style='left:633.41px;top:432px;font-size:9.00px;color:#262626;transform:scaleX(0.8889);'>791215</div>
<div class='t' style='left:176.51px;top:445px;font-size:9.00px;color:#262626;transform:scaleX(0.8889);'>Broadcast</div>
<div class='t' style='left:358.90px;top:445px;font-size:9.00px;color:#262626;transform:scaleX(0.8889);'>82110</div>
<div class='t' style='left:504.00px;top:445px;font-size:9.00px;color:#262626;transform:scaleX(0.8889);'>81616</div>
<div class='t' style='left:634.30px;top:445px;font-size:9.00px;color:#262626;transform:scaleX(0.8889);'>494</div>
<div class='t' style='left:176.51px;top:458px;font-size:9.00px;color:#262626;transform:scaleX(0.8889);'>Multicast</div>
<div class='t' style='left:358.90px;top:458px;font-size:9.00px;color:#262626;transform:scaleX(0.8889);'>96899</div>
<div class='t' style='left:504.00px;top:458px;font-size:9.00px;color:#262626;transform:scaleX(0.8889);'>96325</div>
<div class='t' style='left:634.30px;top:458px;font-size:9.00px;color:#262626;transform:scaleX(0.8889);'>574</div>
<div class='t' style='left:177.40px;top:471px;font-size:9.00px;color:#262626;transform:scaleX(0.8889);'>CRC Errors</div>
<div class='t' style='left:358.90px;top:471px;font-size:9.00px;color:#262626;transform:scaleX(0.8889);'>0</div>
<div class='t' style='left:504.00px;top:471px;font-size:9.00px;color:#262626;transform:scaleX(0.8889);'>0</div>
<div class='t' style='left:634.30px;top:471px;font-size:9.00px;color:#262626;transform:scaleX(0.8889);'>0</div>
<div class='t' style='left:176.51px;top:484px;font-size:9.00px;color:#262626;transform:scaleX(0.8889);'>Runts</div>
<div class='t' style='left:358.90px;top:484px;font-size:9.00px;color:#262626;transform:scaleX(0.8889);'>0</div>
<div class='t' style='left:504.00px;top:484px;font-size:9.00px;color:#262626;transform:scaleX(0.8889);'>0</div>
<div class='t' style='left:634.30px;top:484px;font-size:9.00px;color:#262626;transform:scaleX(0.8889);'>0</div>
<div class='t' style='left:176.51px;top:497px;font-size:9.00px;color:#262626;transform:scaleX(0.8889);'>Errors</div>
<div class='t' style='left:358.90px;top:497px;font-size:9.00px;color:#262626;transform:scaleX(0.8889);'>0</div>
<div class='t' style='left:504.00px;top:497px;font-size:9.00px;color:#262626;transform:scaleX(0.8889);'>0</div>
<div class='t' style='left:634.30px;top:497px;font-size:9.00px;color:#262626;transform:scaleX(0.8889);'>0</div>
<div class='t' style='left:813.51px;top:432px;font-size:9.00px;color:#262626;transform:scaleX(0.8889);'>Uni-Directional Links</div>
<div class='t' style='left:1186.40px;top:432px;font-size:9.00px;color:#262626;transform:scaleX(0.8889);'>Yes</div>
<div class='t' style='left:813.51px;top:445px;font-size:9.00px;color:#262626;transform:scaleX(0.8889);'>Buffer Overflow</div>
<div class='t' style='left:1186.40px;top:445px;font-size:9.00px;color:#262626;transform:scaleX(0.8889);'>0</div>
<div class='t' style='left:814.40px;top:458px;font-size:9.00px;color:#262626;transform:scaleX(0.8889);'>Queue Drops</div>
<div class='t' style='left:1186.40px;top:458px;font-size:9.00px;color:#262626;transform:scaleX(0.8889);'>0</div>
<div class='t' style='left:814.40px;top:471px;font-size:9.00px;color:#262626;transform:scaleX(0.8889);'>Optics Inserted</div>
<div class='t' style='left:1185.51px;top:471px;font-size:9.00px;color:#262626;transform:scaleX(0.8889);'>NA</div>
<div class='t' style='left:813.51px;top:484px;font-size:9.00px;color:#262626;transform:scaleX(0.8889);'>Loopback Enabled</div>
<div class='t' style='left:1185.51px;top:484px;font-size:9.00px;color:#262626;transform:scaleX(0.8889);'>No</div>
<!-- cursor -->
<svg class="a" style="left:197px;top:140px" width="16" height="19" viewBox="0 0 16 19">
 <path d="M5.5 1.5 Q6.8 0.8 7.5 1.8 L7.5 7.2 Q8.5 6.4 9.5 7.4 Q10.6 6.8 11.4 7.8 Q12.6 7.4 13.2 8.6 L13.2 13.2 Q13 15 11.8 16.6 L11.8 18 L5.4 18 L5.4 16.8 Q3.5 14.8 1.3 12.3 Q0.6 11.2 1.6 10.6 Q2.6 10.2 3.6 11.2 L5.5 12.8 Z" fill="#fff" stroke="#222" stroke-width="0.9" stroke-linejoin="round"/>
 <path d="M9.4 8 L9.4 11.5 M11.3 8.4 L11.3 11.5" stroke="#222" stroke-width="0.7"/>
</svg>

<div class='b' style='left:208px;top:152px;width:103px;height:67px;border:1px solid #767676;background:#fff;box-shadow:1px 1px 1.5px rgba(0,0,0,0.18)'></div>
<div class='t' style='left:213.63px;top:158px;font-size:9.35px;color:#575757;transform:scaleX(0.9709);'>Port Name: Gi1/0/2</div>
<div class='t' style='left:213.64px;top:170px;font-size:9.35px;color:#575757;transform:scaleX(0.9640);'>Status: not connected</div>
<div class='t' style='left:213.65px;top:182px;font-size:9.35px;color:#575757;transform:scaleX(0.9524);'>Speed: 0 Mbps</div>
<div class='t' style='left:213.65px;top:194px;font-size:9.35px;color:#575757;transform:scaleX(0.9524);'>Duplex mode: full</div>
<div class='t' style='left:213.65px;top:206px;font-size:9.35px;color:#575757;transform:scaleX(0.9516);'>Power drawn: 30 Watts</div>
</body></html>
